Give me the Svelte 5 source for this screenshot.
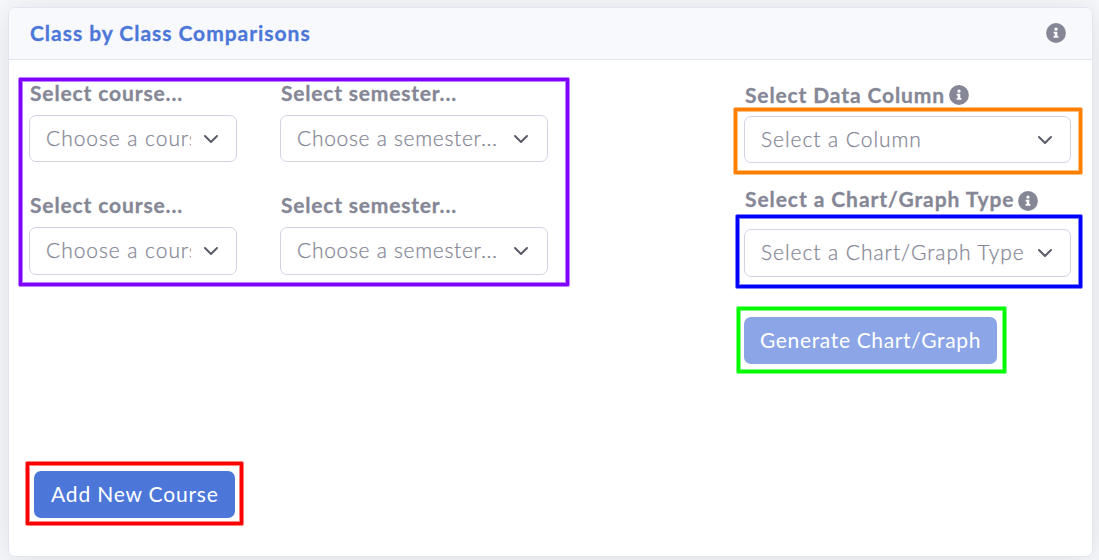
<script>
  const rows = [1, 2];
</script>

{#snippet info()}
  <svg class="info" viewBox="0 0 20 20" aria-hidden="true">
    <circle cx="10" cy="10" r="9.9" fill="#858796" />
    <circle cx="10" cy="6.1" r="1.7" fill="#fff" />
    <path d="M7.6 8.7h3.7v4.2h1.1v1.9H7.6v-1.9h1.1v-2.3H7.6z" fill="#fff" />
  </svg>
{/snippet}

{#snippet picker(text, kind)}
  <div class="select {kind}" role="button" tabindex="-1">
    <span class="value">{text}</span>
    <svg class="chevron" viewBox="0 0 16 16" aria-hidden="true">
      <path d="M2 5l6 6 6-6" fill="none" stroke="#5a5c69" stroke-width="2" stroke-linecap="round" stroke-linejoin="round" />
    </svg>
  </div>
{/snippet}

<main class="page">
  <section class="card">
    <header>
      <h1>Class by Class Comparisons</h1>
      {@render info()}
    </header>
    <div class="body">
      <div class="left">
        {#each rows as row (row)}
          <div class="row" class:first={row === 1}>
            <div class="field course">
              <div class="label l-course">Select course...</div>
              {@render picker('Choose a course...', 'v-course')}
            </div>
            <div class="field semester">
              <div class="label l-sem">Select semester...</div>
              {@render picker('Choose a semester...', 'v-sem')}
            </div>
          </div>
        {/each}
        <button class="btn add">Add New Course</button>
      </div>
      <div class="right">
        <div class="label l-col"><span>Select Data Column</span>{@render info()}</div>
        {@render picker('Select a Column', 'v-col')}
        <div class="label l-type"><span>Select a Chart/Graph Type</span>{@render info()}</div>
        {@render picker('Select a Chart/Graph Type', 'v-type')}
        <button class="btn generate">Generate Chart/Graph</button>
      </div>
    </div>
  </section>
  <div class="frame purple"></div>
  <div class="frame orange"></div>
  <div class="frame blue"></div>
  <div class="frame green"></div>
  <div class="frame red"></div>
</main>

<style>
  :global(body) { margin: 0; background: #f8f9fc; }
  .page {
    position: relative; box-sizing: border-box; width: 1099px; height: 560px;
    padding: 7px 6px 3px 8px; overflow: hidden;
    font-family: Lato, 'Open Sans', sans-serif; color: #858796; font-size: 21px;
  }
  .card {
    box-sizing: border-box; height: 550px; background: #fff; border: 1px solid #e3e6f0;
    border-radius: 7px; box-shadow: 0 3px 35px rgba(58, 59, 69, 0.15); overflow: hidden;
  }
  header {
    box-sizing: border-box; height: 52px; display: flex; align-items: center;
    justify-content: space-between; padding: 0 26px 2px 21px;
    background: #f8f9fc; border-bottom: 1px solid #e3e6f0;
  }
  h1 {
    margin: 0; font-size: 21px; line-height: 24px; font-weight: 700; color: #4c77d9;
    letter-spacing: 0.97px; white-space: nowrap; -webkit-text-stroke: 0.3px currentColor;
  }
  .info { width: 20px; height: 20px; flex: none; display: block; }
  .body { display: flex; justify-content: space-between; padding: 0 21px 0 20px; }
  .left { padding-top: 21px; }
  .row { display: flex; gap: 43px; height: 112px; }
  .field.course { width: 208px; }
  .field.semester { width: 268px; }
  .label {
    height: 24px; line-height: 24px; font-weight: 700; white-space: nowrap; display: flex;
    padding-left: 1px; letter-spacing: 0.87px; -webkit-text-stroke: 0.3px currentColor;
  }
  .row .label { margin-bottom: 10px; }
  .l-sem { letter-spacing: 0.8px; }
  .l-type { letter-spacing: 0.93px; }
  .select {
    box-sizing: border-box; width: 100%; height: 48px; display: flex; align-items: center;
    justify-content: space-between; background: #fff; border: 1px solid #d1d3e2;
    border-radius: 7px; padding: 0 17px 0 15px;
  }
  .first .select, .v-col { height: 47px; }
  .value {
    flex: 1; overflow: hidden; margin: -2px 9px 0 0; padding-left: 1px; line-height: 28px;
    white-space: nowrap; font-weight: 300; letter-spacing: 0.94px; -webkit-text-stroke: 0.25px currentColor;
  }
  .v-course .value { margin-right: 12px; }
  .v-sem { padding-right: 18px; }
  .v-sem .value { letter-spacing: 0.7px; }
  .chevron { width: 16px; height: 16px; flex: none; }
  .right { width: 327px; padding-top: 23px; }
  .right .label { gap: 4px; }
  .right .l-col { margin-bottom: 9px; }
  .right .l-col .info { margin-top: 2px; }
  .right .l-type { margin-top: 24px; margin-bottom: 18px; }
  .right .l-type .info { margin-top: 4px; }
  .btn {
    display: block; box-sizing: border-box; border: 0; border-radius: 7px; padding: 0 0 2px 17px;
    height: 47px; color: #fff; background: #4c77d9; font: 400 21px/28px Lato, sans-serif;
    text-align: left; white-space: nowrap; letter-spacing: 0.82px;
  }
  .generate { width: 253px; margin-top: 40px; padding-left: 16px; background: #8ba5e7; letter-spacing: 0.65px; }
  .add { width: 201px; margin: 166px 0 0 5px; }
  .frame {
    position: absolute; box-sizing: border-box; border-radius: 2px;
    border: 1px solid color-mix(in srgb, var(--c) 50%, transparent);
    box-shadow: inset 0 0 0 3px var(--c), inset 0 0 0 4px color-mix(in srgb, var(--c) 50%, transparent);
  }
  .purple { left: 18px; top: 77px; width: 552px; height: 210px; --c: #8000ff; }
  .orange { left: 733px; top: 107px; width: 350px; height: 68px; --c: #ff8000; }
  .blue { left: 735px; top: 214px; width: 348px; height: 75px; --c: #0000ff; }
  .green { left: 736px; top: 306px; width: 271px; height: 68px; --c: #00ff00; }
  .red { left: 25px; top: 461px; width: 219px; height: 65px; --c: #ff0000; }
</style>
